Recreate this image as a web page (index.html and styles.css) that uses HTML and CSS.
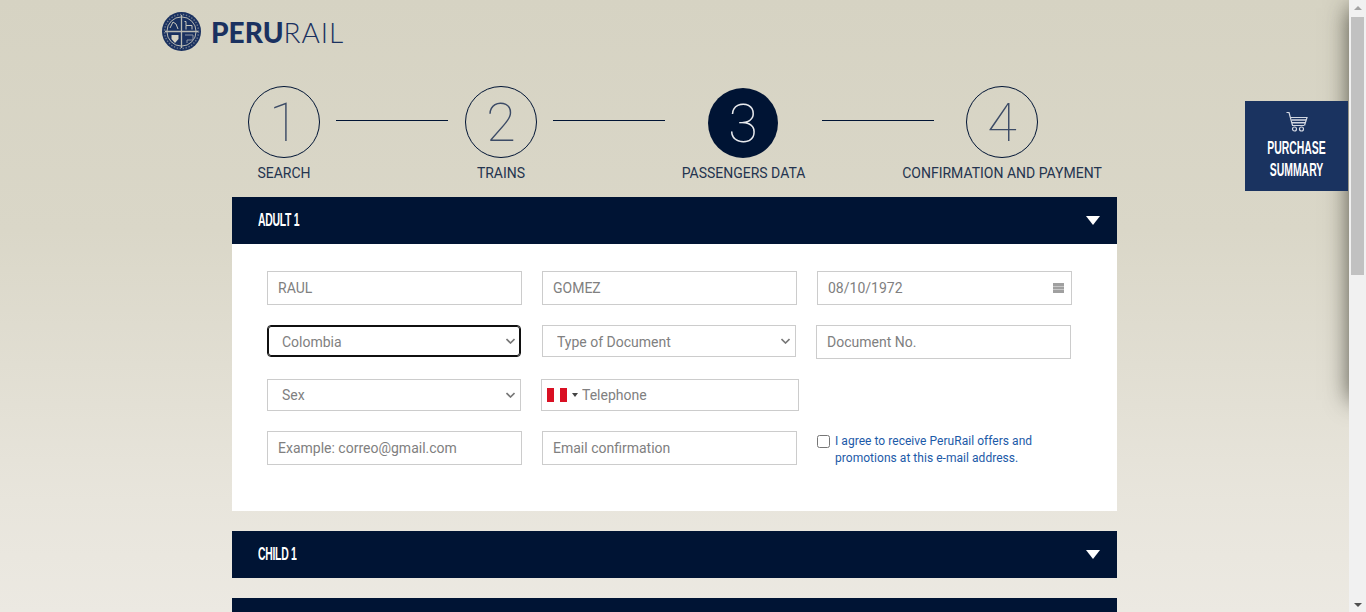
FILE: index.html
```html
<!DOCTYPE html>
<html lang="en">
<head>
<meta charset="UTF-8">
<meta name="viewport" content="width=device-width, initial-scale=1.0">
<title>PeruRail - Passengers Data</title>
<link rel="stylesheet" href="styles.css">
</head>
<body>
  <div class="page">
    <header class="site-header">
      <svg class="logo-mark" viewBox="0 0 39 39" width="39" height="39" aria-hidden="true">
        <circle cx="19.5" cy="19.5" r="19.5" fill="#1a3160"/>
        <circle cx="19.5" cy="19.5" r="14.6" fill="none" stroke="#b9bab3" stroke-width="1"/>
        <circle cx="19.5" cy="19.5" r="17" fill="none" stroke="#6f7a8e" stroke-width="1.4" stroke-dasharray="1.400 1.600"/>
        <path d="M19.5 3v33M3 19.5h33" stroke="#b9bab3" stroke-width="1.300"/>
        <path d="M8 16l3-6 3 2 2 5M22.500 9.500h1.500v4h6v4M24 17.500v-4" fill="none" stroke="#c9c8bd" stroke-width="1"/>
        <path d="M9.500 23h7v4l-3.500 4-3.500-4z" fill="#d6d3c3"/>
        <path d="M23 23h8v5h-6v3" fill="none" stroke="#8f96a3" stroke-width="1"/>
      </svg>
      <div class="logo-text"><b>PERU</b>RAIL</div>
    </header>

    <ol class="steps">
      <li class="step">
        <span class="step-num">1</span>
        <span class="step-label">SEARCH</span>
      </li>
      <li class="step-line"></li>
      <li class="step">
        <span class="step-num">2</span>
        <span class="step-label">TRAINS</span>
      </li>
      <li class="step-line"></li>
      <li class="step step-now">
        <span class="step-num current">3</span>
        <span class="step-label">PASSENGERS DATA</span>
      </li>
      <li class="step-line"></li>
      <li class="step step-last">
        <span class="step-num">4</span>
        <span class="step-label">CONFIRMATION AND PAYMENT</span>
      </li>
    </ol>

    <main class="passengers">
      <section class="panel">
        <div class="panel-head">
          <h3>ADULT 1</h3>
          <span class="arrow"></span>
        </div>
        <form class="panel-body">
          <div class="row">
            <input class="field" type="text" value="RAUL">
            <input class="field" type="text" value="GOMEZ">
            <div class="date-wrap">
              <input class="field" type="text" value="08/10/1972">
              <svg class="date-icon" viewBox="0 0 11 10" width="11" height="10" aria-hidden="true">
                <path d="M0 0h11v10H0z" fill="#a0a0a0"/>
                <path d="M0 3h11v1H0zM0 6h11v1H0z" fill="#c8c8c8"/>
              </svg>
            </div>
          </div>
          <div class="row">
            <select class="pick pick-low is-focused">
              <option>Colombia</option>
            </select>
            <select class="pick pick-low pick-doc">
              <option>Type of Document</option>
            </select>
            <input class="field" type="text" placeholder="Document No.">
          </div>
          <div class="row">
            <select class="pick">
              <option>Sex</option>
            </select>
            <div class="tel">
              <span class="flag"></span>
              <span class="caret"></span>
              <input class="tel-input" type="text" placeholder="Telephone">
            </div>
          </div>
          <div class="row">
            <input class="field" type="text" placeholder="Example: correo@gmail.com">
            <input class="field" type="text" placeholder="Email confirmation">
            <label class="offers">
              <input type="checkbox">
              <span>I agree to receive PeruRail offers and promotions at this e-mail address.</span>
            </label>
          </div>
        </form>
      </section>

      <section class="panel">
        <div class="panel-head">
          <h3>CHILD 1</h3>
          <span class="arrow"></span>
        </div>
      </section>

      <section class="panel">
        <div class="panel-head"></div>
      </section>
    </main>

    <div class="drawer"></div>
    <a class="summary-tab" href="#">
      <svg viewBox="0 0 22 20" width="22" height="20" aria-hidden="true">
        <path d="M0.5 0.500h2.500l3.500 13h11.500M4.500 5.500h16.500l-2.500 8" fill="none" stroke="#d3d8e2" stroke-width="1.200"/>
        <path d="M5.500 8h14.500M6 10.700h13" stroke="#d3d8e2" stroke-width="1.500"/>
        <circle cx="8.500" cy="17" r="2" fill="none" stroke="#d3d8e2" stroke-width="1.200"/>
        <circle cx="15.500" cy="17" r="2" fill="none" stroke="#d3d8e2" stroke-width="1.200"/>
      </svg>
      <span>PURCHASE<br>SUMMARY</span>
    </a>
  </div>

  <div class="scrollbar">
    <span class="sb-up"></span>
    <span class="sb-thumb"></span>
    <span class="sb-down"></span>
  </div>
</body>
</html>
```

FILE: styles.css
```css
html, body {
  height: 100%;
}
body {
  margin: 0;
  display: flex;
  overflow: hidden;
  font-family: Roboto, "Liberation Sans", sans-serif;
  color: #001434;
}

.page {
  position: relative;
  flex: 1;
  overflow: hidden;
  background: linear-gradient(#d6d3c3 0, #dad7c8 230px, #e8e5dc 500px, #ece9e2 612px);
}

/* header */
.site-header {
  display: flex;
  align-items: center;
  height: 39px;
  padding: 12px 0 35px 162px;
}
.logo-text {
  margin-left: 10px;
  font-family: Lato, sans-serif;
  font-size: 28px;
  font-weight: 300;
  letter-spacing: 0.95px;
  color: #1a3160;
}
.logo-text b {
  font-weight: 900;
  letter-spacing: 0;
}

/* steps */
.steps {
  display: flex;
  list-style: none;
  margin: 0 0 14px 248px;
  padding: 0;
}
.step {
  display: flex;
  flex-direction: column;
  align-items: center;
}
.step-num {
  box-sizing: border-box;
  display: flex;
  align-items: center;
  justify-content: center;
  width: 72px;
  height: 72px;
  border: 1px solid #001434;
  border-radius: 50%;
  font-size: 54px;
  font-weight: 100;
  color: #3c4b66;
}
.step-num.current {
  width: 70px;
  height: 70px;
  margin: 2px 0 0 -1px;
  border: none;
  background-color: #001434;
  color: #e8eaee;
}
.step-label {
  margin-top: 5px;
  font-size: 14px;
  line-height: 20px;
  white-space: nowrap;
  color: #24344f;
}
.step-line {
  width: 112px;
  height: 1px;
  margin: 34px 17px 0 16px;
  background-color: #001434;
}
.step-line:nth-child(6) {
  margin: 34px -31px 0 17px;
}
.step-now {
  width: 123px;
}
.step-last {
  width: 198px;
}

/* passenger panels */
.passengers {
  width: 885px;
  margin-left: 232px;
}
.panel {
  margin-bottom: 20px;
}
.panel-head {
  display: flex;
  justify-content: space-between;
  align-items: center;
  height: 47px;
  padding: 0 17px 0 26px;
  background-color: #001434;
  color: white;
}
.panel-head h3 {
  margin: 0;
  font-family: "Liberation Sans", sans-serif;
  font-size: 18px;
  font-weight: 700;
  letter-spacing: -0.5px;
  white-space: nowrap;
  transform: scaleX(0.58);
  transform-origin: left center;
}
.arrow {
  width: 0;
  height: 0;
  border-left: 7px solid transparent;
  border-right: 7px solid transparent;
  border-top: 9px solid white;
}
.panel-body {
  padding: 27px 45px 46px 35px;
  background-color: white;
}

/* form rows */
.row {
  display: flex;
  align-items: flex-start;
  gap: 20px;
  margin-bottom: 20px;
}
.row:last-child {
  margin-bottom: 0;
}
.field {
  box-sizing: border-box;
  width: 255px;
  height: 34px;
  padding: 0 10px;
  border: 1px solid #ccc;
  background-color: white;
  font-family: inherit;
  font-size: 14px;
  color: #808080;
}
.field::placeholder,
.tel-input::placeholder {
  color: #808080;
}
.pick {
  box-sizing: border-box;
  appearance: none;
  width: 254px;
  height: 32px;
  padding-left: 14px;
  border: 1px solid #ccc;
  border-radius: 0;
  background: white url("data:image/svg+xml,%3Csvg xmlns='http://www.w3.org/2000/svg' width='9' height='6'%3E%3Cpath d='M.5 1l4 4 4-4' fill='none' stroke='%23777' stroke-width='1.600'/%3E%3C/svg%3E") no-repeat right 5px center;
  font-family: inherit;
  font-size: 14px;
  color: #808080;
}
.pick-low {
  padding-top: 2px;
}
.pick.is-focused {
  border-color: #101010;
  border-radius: 4px;
  outline: 1px solid #101010;
  outline-offset: -2px;
}
.pick-doc {
  margin-left: 1px;
}
.date-wrap {
  position: relative;
}
.date-icon {
  position: absolute;
  top: 12px;
  right: 8px;
}

.tel {
  box-sizing: border-box;
  display: flex;
  align-items: center;
  width: 258px;
  height: 32px;
  padding-left: 5px;
  border: 1px solid #ccc;
}
.flag {
  width: 20px;
  height: 14px;
  background: linear-gradient(90deg, #d91023 35%, #fff 35%, #fff 65%, #d91023 65%);
}
.caret {
  width: 0;
  height: 0;
  margin: 0 4px 0 5px;
  border-left: 3px solid transparent;
  border-right: 3px solid transparent;
  border-top: 4px solid #444;
}
.tel-input {
  flex: 1;
  min-width: 0;
  padding: 0;
  border: none;
  outline: none;
  font-family: inherit;
  font-size: 14px;
}

.offers {
  display: flex;
  width: 225px;
  height: 34px;
  font-size: 12px;
  line-height: 17px;
  letter-spacing: 0.04px;
  color: #1c5aa8;
}
.offers span {
  padding-top: 2px;
}
.offers input {
  flex: none;
  width: 13px;
  height: 13px;
  margin: 4px 5px 0 0;
}

/* purchase summary tab, sits over the drawer shadow */
.drawer {
  position: absolute;
  top: 8px;
  left: 100%;
  width: 300px;
  height: 392px;
  box-shadow: 0 0 22px rgba(40, 40, 30, 0.75);
}
.summary-tab {
  box-sizing: border-box;
  position: absolute;
  top: 101px;
  right: 1px;
  display: flex;
  flex-direction: column;
  align-items: center;
  width: 103px;
  height: 90px;
  padding-top: 11px;
  background-color: #1a3360;
  color: white;
  font-family: "Liberation Sans", sans-serif;
  font-size: 18px;
  font-weight: 700;
  line-height: 22px;
  text-align: center;
  text-decoration: none;
}
.summary-tab span {
  margin: 5px 0 0 1px;
  white-space: nowrap;
  transform: scaleX(0.58);
}

/* fake window scrollbar */
.scrollbar {
  position: relative;
  flex: none;
  width: 17px;
  background-color: #f1f1f1;
}
.sb-thumb {
  position: absolute;
  top: 17px;
  left: 2px;
  width: 13px;
  height: 258px;
  background-color: #c1c1c1;
}
.sb-up,
.sb-down {
  position: absolute;
  left: 5px;
  width: 0;
  height: 0;
  border-left: 4px solid transparent;
  border-right: 4px solid transparent;
}
.sb-up {
  top: 6px;
  border-bottom: 4px solid #a3a3a3;
}
.sb-down {
  bottom: 5px;
  border-top: 4px solid #505050;
}
```
